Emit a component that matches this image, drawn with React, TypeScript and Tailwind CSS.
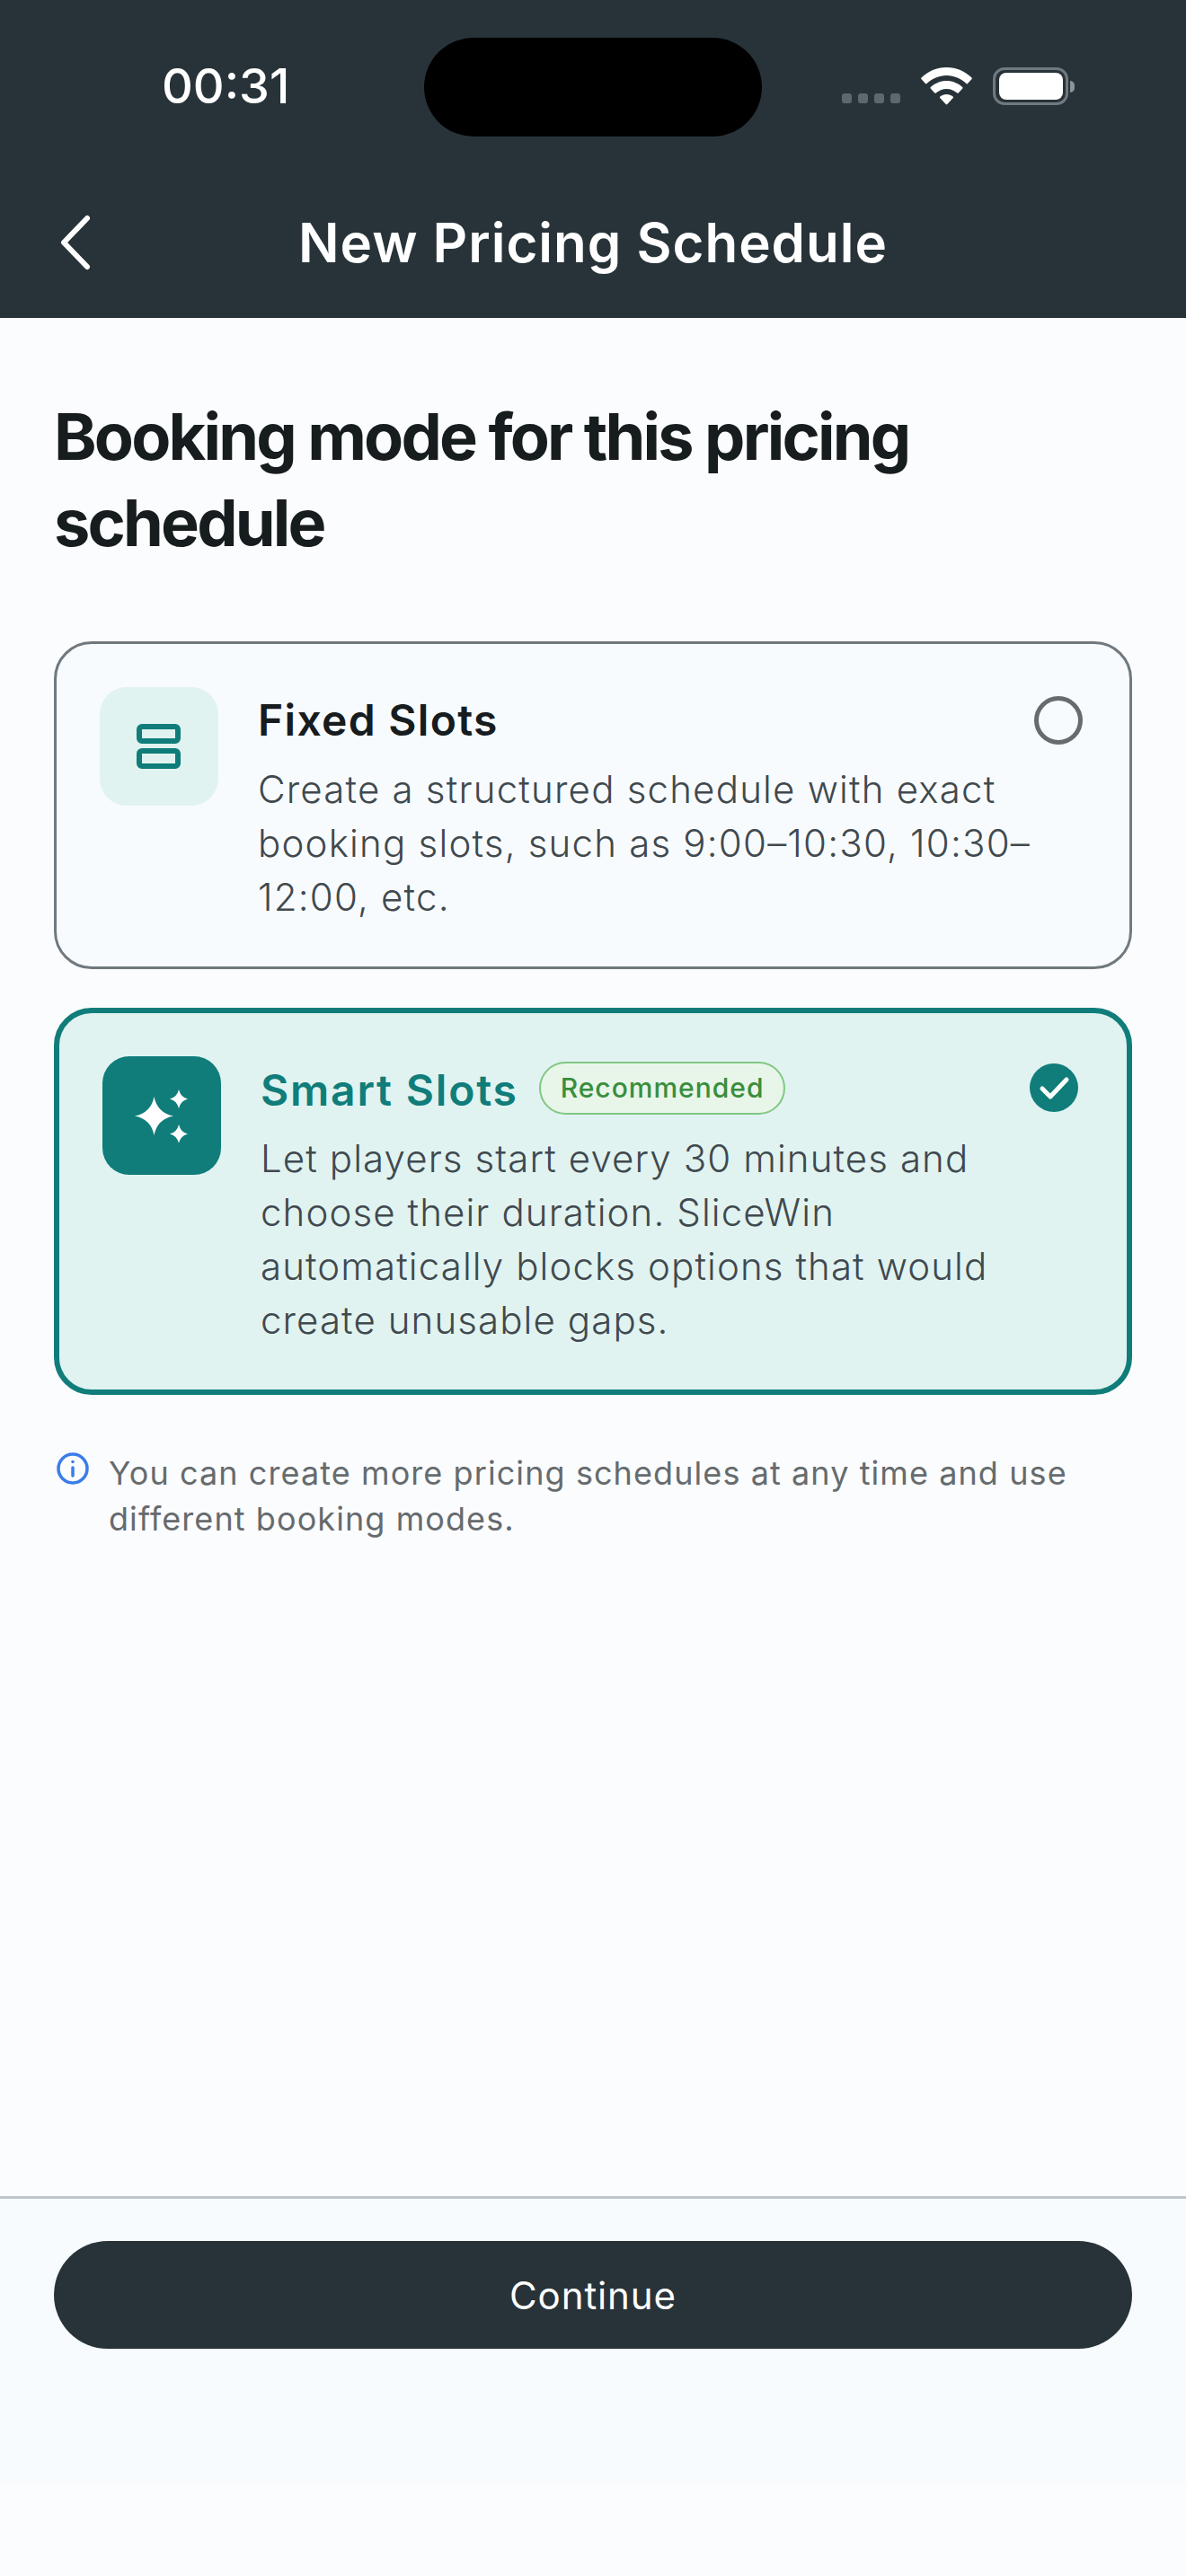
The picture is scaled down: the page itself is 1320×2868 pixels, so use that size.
const FONT = "font-['Inter',sans-serif]";

function StatusBar() {
  return (
    <div className="relative flex h-[210px] items-start px-[180px] pt-[68px]">
      <span className="text-[54px] leading-[56px] font-medium text-white">00:31</span>
      <div className="absolute top-[42px] left-[472px] h-[110px] w-[376px] rounded-full bg-black" />
      <div className="absolute top-[75px] left-[937px] flex items-center">
        <div className="mt-[26px] flex gap-[7px]">
          {[0, 1, 2, 3].map((i) => (
            <div key={i} className="h-[11px] w-[11px] rounded-[3px] bg-[#5d686e]" />
          ))}
        </div>
        <svg className="ml-[23px]" width="57" height="42" viewBox="0 0 57 42" fill="#fff">
          <path d="M28.5 0C17.5 0 7.8 4.3 0.5 11.5C0 12 0 12.5 0.4 13L5 18C5.5 18.5 6 18.5 6.5 18C12.5 12.5 20 9 28.5 9C37 9 44.5 12.5 50.5 18C51 18.5 51.5 18.5 52 18L56.6 13C57 12.5 57 12 56.5 11.5C49.2 4.3 39.5 0 28.5 0Z" />
          <path d="M28.5 15C21.5 15 15.5 17.7 10.8 22C10.3 22.5 10.3 23 10.7 23.4L15.3 28.4C15.7 28.9 16.2 28.9 16.7 28.5C20 25.8 24 24 28.5 24C33 24 37 25.8 40.3 28.5C40.8 28.9 41.3 28.9 41.7 28.4L46.3 23.4C46.7 23 46.7 22.5 46.2 22C41.5 17.7 35.5 15 28.5 15Z" />
          <path d="M28.5 30C25.8 30 23.3 31 21.3 32.6C20.9 33 20.8 33.5 21.2 33.9L27.7 41C28.2 41.5 28.8 41.5 29.3 41L35.8 33.9C36.2 33.5 36.1 33 35.7 32.6C33.7 31 31.2 30 28.5 30Z" />
        </svg>
        <div className="ml-[23px] flex h-[42px] w-[84px] items-center justify-center rounded-[13px] border-[3px] border-[#6f797e]">
          <div className="h-[30px] w-[71px] rounded-[8px] bg-white" />
        </div>
        <div className="ml-[2px] h-[13px] w-[5px] rounded-r-full bg-[#8b9498]" />
      </div>
    </div>
  );
}

function Sparkles() {
  return (
    <svg width="60" height="60" viewBox="0 0 60 60" fill="#fff">
      <path d="M21.5 9Q25 27 43 30.5Q25 34 21.5 52Q18 34 0 30.5Q18 27 21.5 9Z" />
      <path d="M49 1Q51 9.5 59 11.5Q51 13.5 49 22Q47 13.5 39 11.5Q47 9.5 49 1Z" />
      <path d="M49 40Q51 48.5 59 50.5Q51 52.5 49 61Q47 52.5 39 50.5Q47 48.5 49 40Z" />
    </svg>
  );
}

export default function App() {
  return (
    <div className={`${FONT} flex h-[2868px] w-[1320px] flex-col overflow-hidden bg-[#fbfcfe]`}>
      <header className="h-[354px] bg-[#283339]">
        <StatusBar />
        <div className="relative flex h-[120px] items-center justify-center">
          <svg className="absolute top-[28px] left-[64px]" width="40" height="64" viewBox="0 0 40 64" fill="none" stroke="#fff" strokeWidth="6" strokeLinecap="round" strokeLinejoin="round">
            <path d="M33 5L7 32L33 59" />
          </svg>
          <h1 className="text-[60px] leading-[70px] font-semibold tracking-[1px] text-white">New Pricing Schedule</h1>
        </div>
      </header>

      <main className="flex-1 px-[60px] pt-[84px]">
        <h2 className="text-[72px] leading-[96px] font-[650] tracking-[-2.8px] text-[#171c1f]">
          Booking mode for this pricing schedule
        </h2>

        <section className="mt-[84px] flex flex-col gap-[43px]">
          <div className="flex h-[365px] rounded-[42px] border-[3px] border-[#70797e] bg-[#f8fbfe] pt-[48px] pr-[52px] pl-[48px]">
            <div className="flex h-[132px] w-[132px] shrink-0 items-center justify-center rounded-[30px] bg-[#e0f3f1]">
              <svg width="60" height="60" viewBox="0 0 60 60" fill="none" stroke="#107d7a" strokeWidth="6">
                <rect x="8" y="8" width="43" height="16" rx="3" />
                <rect x="8" y="35" width="43" height="17" rx="3" />
              </svg>
            </div>
            <div className="ml-[44px] flex-1">
              <h3 className="mt-[5px] text-[48px] leading-[64px] font-semibold tracking-[1.3px] text-[#171c1f]">Fixed Slots</h3>
              <p className="mt-[15px] -mr-[30px] text-[42px] leading-[60px] font-[350] tracking-[1.2px] text-[#40494e]">
                Create a structured schedule with exact booking slots, such as 9:00–10:30, 10:30–12:00, etc.
              </p>
            </div>
            <div className="mt-[10px] h-[54px] w-[54px] shrink-0 rounded-full border-[5px] border-[#666b6e]" />
          </div>

          <div className="flex h-[431px] rounded-[42px] border-[6px] border-[#107d7a] bg-[#e0f3f1] pt-[48px] pr-[54px] pl-[48px]">
            <div className="flex h-[132px] w-[132px] shrink-0 items-center justify-center rounded-[30px] bg-[#107d7a]">
              <Sparkles />
            </div>
            <div className="ml-[44px] flex-1">
              <div className="mt-[6px] flex items-start gap-[23px]">
                <h3 className="text-[48px] leading-[64px] font-semibold tracking-[1.8px] text-[#107d7a]">Smart Slots</h3>
                <span className="rounded-full border-[2px] border-[#81c784] bg-[#e8f5e9] px-[22px] text-[30px] leading-[55px] font-medium tracking-[1px] text-[#388e3c]">
                  Recommended
                </span>
              </div>
              <p className="mt-[14px] text-[42px] leading-[60px] font-[350] tracking-[1.1px] text-[#40494e]">
                Let players start every 30 minutes and choose their duration. SliceWin automatically blocks options that would create unusable gaps.
              </p>
            </div>
            <svg className="mt-[8px] shrink-0" width="54" height="54" viewBox="0 0 54 54">
              <circle cx="27" cy="27" r="27" fill="#107d7a" />
              <path d="M14 28L23 37L41 18" fill="none" stroke="#fff" strokeWidth="5" strokeLinecap="round" strokeLinejoin="round" />
            </svg>
          </div>
        </section>

        <div className="mt-[62px] flex gap-[19px]">
          <svg className="-mt-[1px] shrink-0" width="42" height="42" viewBox="0 0 42 42" fill="none" stroke="#3b7de8" strokeWidth="3.5" strokeLinecap="round">
            <circle cx="21" cy="21" r="16" />
            <path d="M21 20V29" />
            <path d="M21 13.5V13.6" />
          </svg>
          <p className="text-[36px] leading-[51px] font-normal tracking-[1.08px] text-[#666b6e]">
            You can create more pricing schedules at any time and use different booking modes.
          </p>
        </div>
      </main>

      <footer className="h-[321px] border-t-[3px] border-[#bec6cc] bg-[#f8fbfd] px-[60px] pt-[47px]">
        <button className="h-[120px] w-full rounded-full bg-[#283339] text-[42px] font-normal tracking-[0.9px] text-white">
          Continue
        </button>
      </footer>
      <div className="h-[102px]" />
    </div>
  );
}
